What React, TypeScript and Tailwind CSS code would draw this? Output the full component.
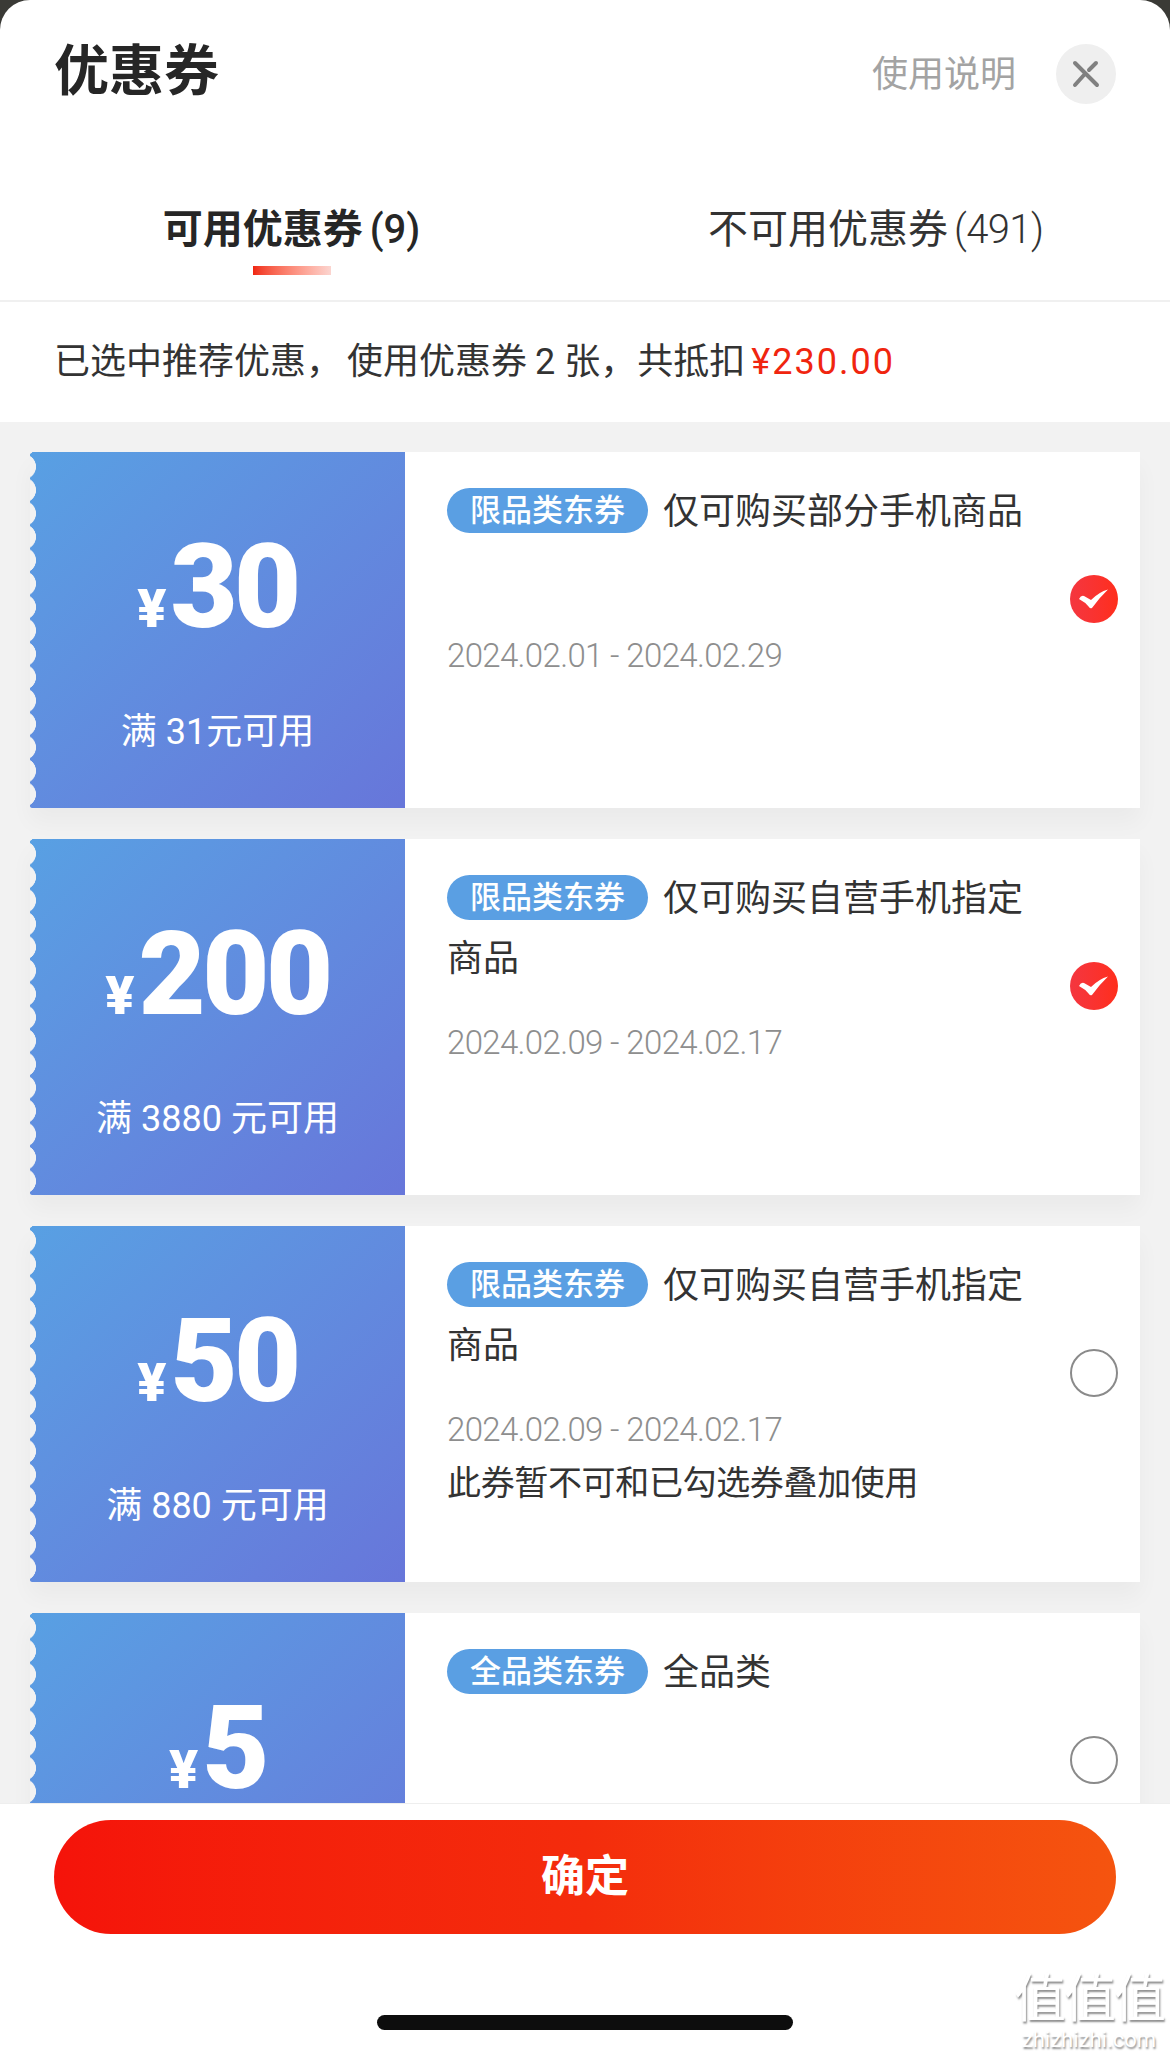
import React from 'react';

type Coupon = {
  amount: string;
  limit?: string;
  tag: string;
  title: string;
  date?: string;
  note?: string;
  checked: boolean;
};

const CJK = "font-['Roboto','Noto_Sans_CJK_SC',sans-serif]";

const coupons: Coupon[] = [
  { amount: '30', limit: '满 31元可用', tag: '限品类东券', title: '仅可购买部分手机商品', date: '2024.02.01 - 2024.02.29', checked: true },
  { amount: '200', limit: '满 3880 元可用', tag: '限品类东券', title: '仅可购买自营手机指定商品', date: '2024.02.09 - 2024.02.17', checked: true },
  { amount: '50', limit: '满 880 元可用', tag: '限品类东券', title: '仅可购买自营手机指定商品', date: '2024.02.09 - 2024.02.17', note: '此券暂不可和已勾选券叠加使用', checked: false },
  { amount: '5', tag: '全品类东券', title: '全品类', checked: false },
];

const CheckMark: React.FC<{ checked: boolean }> = ({ checked }) => {
  if (!checked) {
    return <div className="w-[48px] h-[48px] rounded-full border-2 border-[#8a8a8a] bg-white" />;
  }
  return (
    <div className="w-[48px] h-[48px] rounded-full bg-gradient-to-r from-[#f4363f] to-[#ff2e1a]">
      <svg width="48" height="48" viewBox="0 0 48 48" fill="#fff">
        <path d="M9 24 Q11 20 14 21 L21 25 Q29 17 38 14.5 Q29 23 22 33 Q20 34 19 32 Q15 27 9 24 Z" />
      </svg>
    </div>
  );
};

const CouponCard: React.FC<{ coupon: Coupon }> = ({ coupon }) => (
  <div className="flex h-[356px] shrink-0 bg-white shadow-[0_14px_22px_rgba(0,0,0,0.035)]">
    <div className="relative w-[375px] shrink-0 flex flex-col items-center bg-gradient-to-br from-[#58a0e3] to-[#6776da] text-white">
      {/* scalloped left edge */}
      <div className="absolute left-0 top-0 bottom-0 w-[8px] bg-[radial-gradient(circle_at_-6.5px_11.7px,#f2f2f2_12.2px,transparent_12.8px)] bg-[length:8px_23.4px] bg-[position:0_3px]" />
      <div className="flex items-baseline mt-[85px] h-[100px] font-['Roboto',sans-serif] font-black leading-[100px]">
        <span className="text-[54px] mr-[4px]">¥</span>
        <span className="text-[116px] tracking-[-3.5px]">{coupon.amount}</span>
      </div>
      {coupon.limit && <div className="mt-[71px] text-[36px] leading-[48px]">{coupon.limit}</div>}
    </div>
    <div className="flex-1 pl-[42px] pt-[30px]">
      <div className="min-h-[120px] w-[600px] text-[36px] leading-[60px] text-[#333]">
        <span className="inline-flex align-top items-center justify-center mt-[6px] mr-[15px] w-[201px] h-[45px] rounded-full bg-[#5a9fe3] text-white text-[31px] font-medium">
          {coupon.tag}
        </span>
        {coupon.title}
      </div>
      {coupon.date && (
        <div className="mt-[31px] font-['Roboto',sans-serif] font-light text-[33px] tracking-[-0.65px] leading-[46px] text-[#8e8e8e]">{coupon.date}</div>
      )}
      {coupon.note && <div className="mt-[5px] text-[34px] tracking-[-0.35px] leading-[50px] text-[#333]">{coupon.note}</div>}
    </div>
    <div className="pt-[123px] pr-[22px]">
      <CheckMark checked={coupon.checked} />
    </div>
  </div>
);

export default function App() {
  return (
    <div className={`relative h-[2054px] w-[1170px] overflow-hidden bg-[#3a3a36] ${CJK}`}>
      <div className="h-full flex flex-col bg-white rounded-t-[30px] overflow-hidden">
        <div className="flex justify-between h-[148px] pl-[54px] pr-[54px]">
          <div className="mt-[31px] text-[55px] leading-[80px] font-bold text-[#262626]">优惠券</div>
          <div className="flex items-center h-[60px] mt-[44px]">
            <span className="text-[36px] text-[#a3a3a3] pt-[2px]">使用说明</span>
            <div className="ml-[40px] w-[60px] h-[60px] rounded-full bg-[#efefef] flex items-center justify-center">
              <svg width="28" height="28" viewBox="0 0 28 28" fill="none" stroke="#808080" strokeWidth="4" strokeLinecap="round">
                <path d="M3 3 L25 25 M3 25 L12 15 M17 10 L24 3" />
              </svg>
            </div>
          </div>
        </div>

        <div className="flex h-[154px] border-b-2 border-[#f0f0f0] text-[40px] leading-[56px]">
          <div className="w-[585px] pl-[162px]">
            <div className="w-[259px] pt-[54px] flex flex-col items-center font-bold text-[#262626]">
              <span className="whitespace-nowrap">可用优惠券<span className="ml-[7px] font-medium">(9)</span></span>
              <div className="mt-[8px] w-[78px] h-[9px] bg-gradient-to-r from-[#f0250f] to-[#fbd5d0]" />
            </div>
          </div>
          <div className="pl-[123px] pt-[54px] text-[#333] whitespace-nowrap">
            不可用优惠券<span className="ml-[6px] font-light tracking-[-0.6px]">(491)</span>
          </div>
        </div>

        <div className="h-[120px] shrink-0 pl-[54px] flex items-center text-[36px] text-[#333] whitespace-nowrap">
          已选中推荐优惠，<span className="ml-[5px]">使用优惠券</span>
          <span className="ml-[8px] mr-[9px]">2</span>张，<span className="ml-[1px]">共抵扣</span>
          <span className="ml-[6px] tracking-[2px] text-[#f0250f]">¥230.00</span>
        </div>

        <div className="flex-1 min-h-0 overflow-hidden bg-[#f2f2f2] px-[30px] pt-[30px] flex flex-col gap-[31px]">
          {coupons.map((c, i) => (
            <CouponCard key={i} coupon={c} />
          ))}
        </div>

        <div className="relative h-[251px] shrink-0 bg-white border-t border-[#eee] px-[54px] pt-[16px]">
          <div className="h-[114px] rounded-full bg-gradient-to-r from-[#f5130a] via-[#f42c0c] to-[#f5540f] flex items-center justify-center text-white text-[44px] font-bold">
            确定
          </div>
          <div className="mt-[81px] mx-auto w-[416px] h-[15px] rounded-full bg-[#0d0d0d]" />
          <div className="absolute right-[6px] bottom-[2px] flex flex-col items-center text-white [text-shadow:1px_2px_2px_rgba(0,0,0,0.45)]">
            <span className="text-[52px] leading-[56px] tracking-[-2px] whitespace-nowrap">值值值</span>
            <span className="text-[22px] leading-[24px] font-['Roboto',sans-serif] whitespace-nowrap">zhizhizhi.com</span>
          </div>
        </div>
      </div>
    </div>
  );
}
